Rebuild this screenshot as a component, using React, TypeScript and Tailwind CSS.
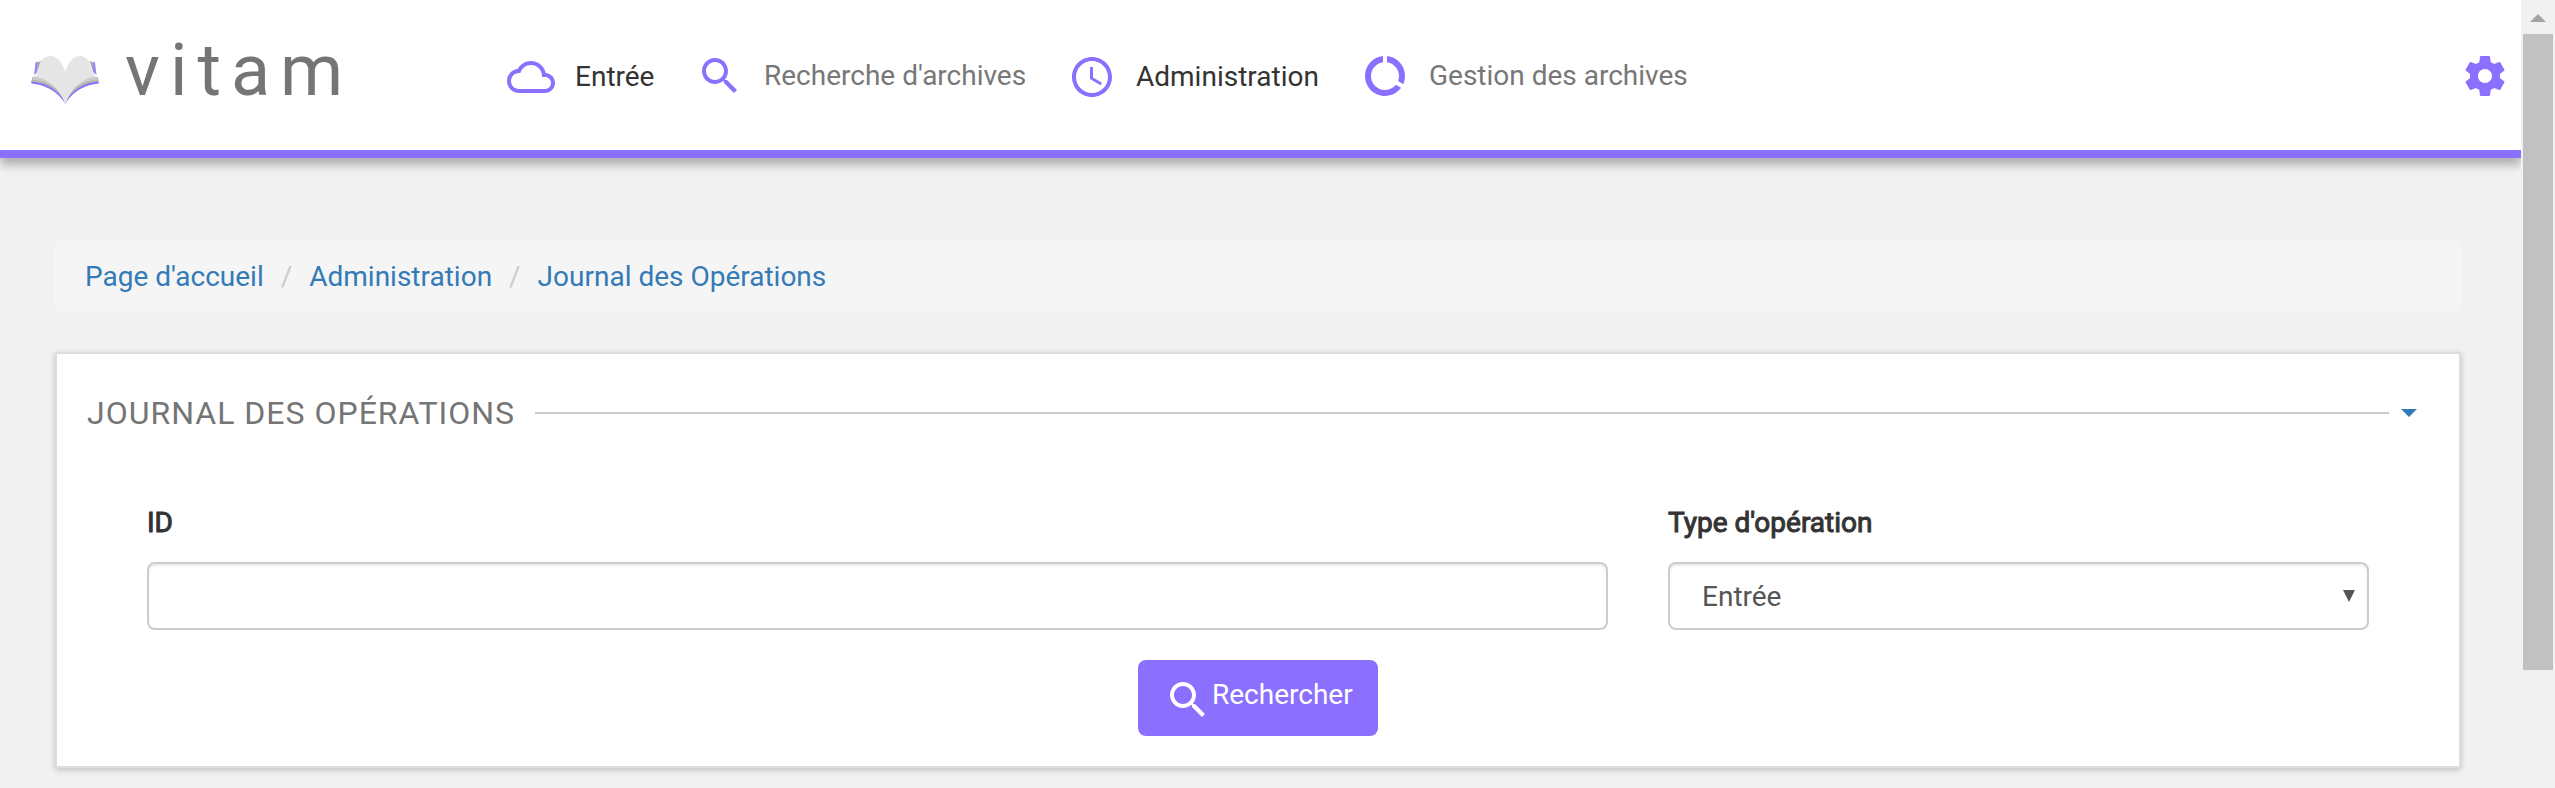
import type { ReactNode } from "react";

const SEARCH =
  "M15.5 14h-.79l-.28-.27C15.41 12.59 16 11.11 16 9.5 16 5.91 13.09 3 9.5 3S3 5.91 3 9.5 5.91 16 9.5 16c1.61 0 3.09-.59 4.23-1.57l.27.28v.79l5 4.99L20.49 19l-4.99-5zm-6 0C7.01 14 5 11.99 5 9.5S7.01 5 9.5 5 14 7.01 14 9.5 11.99 14 9.5 14z";
const CLOUD =
  "M19.35 10.04C18.67 6.59 15.64 4 12 4 9.11 4 6.6 5.64 5.35 8.04 2.34 8.36 0 10.91 0 14c0 3.31 2.69 6 6 6h13c2.76 0 5-2.24 5-5 0-2.64-2.05-4.78-4.65-4.96zM19 18H6c-2.21 0-4-1.79-4-4s1.79-4 4-4h.71C7.37 7.69 9.48 6 12 6c3.04 0 5.5 2.46 5.5 5.5v.5H19c1.66 0 3 1.34 3 3s-1.34 3-3 3z";
const CLOCK =
  "M11.99 2C6.47 2 2 6.48 2 12s4.47 10 9.99 10C17.52 22 22 17.52 22 12S17.52 2 11.99 2zM12 20c-4.42 0-8-3.58-8-8s3.58-8 8-8 8 3.58 8 8-3.58 8-8 8zM12.5 7H11v6l5.25 3.15.75-1.23-4.5-2.67z";
const USAGE =
  "M13 2.05v3.03c3.39.49 6 3.39 6 6.92 0 .9-.18 1.75-.48 2.54l2.6 1.53c.56-1.24.88-2.62.88-4.07 0-5.18-3.95-9.45-9-9.95zM12 19c-3.87 0-7-3.13-7-7 0-3.53 2.61-6.43 6-6.92V2.05c-5.06.5-9 4.76-9 9.95 0 5.52 4.47 10 9.99 10 3.31 0 6.24-1.61 8.06-4.09l-2.6-1.53C16.17 17.98 14.21 19 12 19z";
const GEAR =
  "M19.43 12.98c.04-.32.07-.64.07-.98s-.03-.66-.07-.98l2.11-1.65c.19-.15.24-.42.12-.64l-2-3.46c-.12-.22-.39-.3-.61-.22l-2.49 1c-.52-.4-1.08-.73-1.69-.98l-.38-2.65C14.46 2.18 14.25 2 14 2h-4c-.25 0-.46.18-.49.42l-.38 2.65c-.61.25-1.17.59-1.69.98l-2.49-1c-.23-.09-.49 0-.61.22l-2 3.46c-.13.22-.07.49.12.64l2.11 1.65c-.04.32-.07.65-.07.98s.03.66.07.98l-2.11 1.65c-.19.15-.24.42-.12.64l2 3.46c.12.22.39.3.61.22l2.49-1c.52.4 1.08.73 1.69.98l.38 2.65c.03.24.24.42.49.42h4c.25 0 .46-.18.49-.42l.38-2.65c.61-.25 1.17-.59 1.69-.98l2.49 1c.23.09.49 0 .61-.22l2-3.46c.12-.22.07-.49-.12-.64l-2.11-1.65zM12 15.5c-1.93 0-3.5-1.57-3.5-3.5s1.57-3.5 3.5-3.5 3.5 1.57 3.5 3.5-1.57 3.5-3.5 3.5z";

function Icon({ d, className = "" }: { d: string; className?: string }) {
  return (
    <svg viewBox="0 0 24 24" className={`size-12 shrink-0 fill-current ${className}`}>
      <path d={d} />
    </svg>
  );
}

function Book() {
  return (
    <svg viewBox="0 0 68 50" className="mt-[55px] ml-[31px] h-[50px] w-[68px] shrink-0">
      <path d="M4.500 7.500L7 6.500 6.500 17l-3.500 3zM64 7.500l-2.500-1 .5 10.500 3.500 3z" fill="#9a86f5" />
      <path d="M6.500 8L10 5.500 6.500 16zM62 8l-3.500-2.500L62 16z" fill="#a8a5b0" />
      <path d="M.3 26v2.500C13 29.500 27 36 34.300 49 41.600 36 55 29.500 67.700 28.500V26z" fill="#8b70ff" />
      <path d="M1.300 22L.3 26.500C14 27.500 28 34 34.300 48.500 40.600 34 54 27.500 67.700 26.500L66.700 22z" fill="#b5b5af" />
      <path d="M2.500 21.500L1.300 24.500C16 25.500 29 33 34.300 48.500 39.600 33 52 25.500 66.700 24.500L65.500 21.500z" fill="#cbcbc8" />
      <path d="M9.500 7.500C14-1 28-4 34.300 17 40.600-4 54-1 58.500 7.500L63.500 21.500C50 24.500 38.500 35 34.300 49.500 30 35 18 24.500 4.500 21.500z" fill="#e5e5e5" />
    </svg>
  );
}

function NavItem({ d, active, className, iconClass, children }: { d: string; active?: boolean; className: string; iconClass: string; children: ReactNode }) {
  return (
    <a className={`flex items-start ${active ? "pt-[53px] text-[#333]" : "pt-[52px] text-[#777]"} ${className}`}>
      <Icon d={d} className={`text-[#8b70ff] ${iconClass}`} />
      <span className="whitespace-nowrap pt-1 leading-10">{children}</span>
    </a>
  );
}

function Header() {
  return (
    <header className="relative flex h-[158px] items-start border-b-8 border-[#8b70ff] bg-white shadow-[0_7px_9px_rgba(0,0,0,0.27)]">
      <Book />
      <div className="ml-[26px] w-[380px] pt-[29px] text-[72px] leading-[84px] tracking-[10px] text-[#757575]">vitam</div>
      <nav className="flex">
        <NavItem d={CLOUD} active className="ml-[2px] w-[189px]" iconClass="mr-[20px]">Entrée</NavItem>
        <NavItem d={SEARCH} className="w-[372px]" iconClass="mr-[20px]">Recherche d'archives</NavItem>
        <NavItem d={CLOCK} active className="w-[293px]" iconClass="mr-[20px]">Administration</NavItem>
        <NavItem d={USAGE} className="" iconClass="mr-[20px]">Gestion des archives</NavItem>
      </nav>
      <Icon d={GEAR} className="mt-[52px] mr-[12px] ml-auto text-[#8b70ff]" />
    </header>
  );
}

function Breadcrumb() {
  return (
    <ol className="flex h-[72px] items-center rounded-lg bg-[#f5f5f5] px-[30px] pt-[2px] text-[#337ab7]">
      <li>Page d'accueil</li>
      <li className="before:px-[10px] before:pl-[17px] before:text-[#ccc] before:content-['/\00a0']">Administration</li>
      <li className="before:px-[10px] before:pl-[17px] before:text-[#ccc] before:content-['/\00a0']">Journal des Opérations</li>
    </ol>
  );
}

const LABEL = "block h-[60px] pt-px leading-10 font-normal text-[#333] [-webkit-text-stroke:1px_#333]";

function SearchPanel() {
  return (
    <section className="mt-10 flex h-[416px] flex-col border-2 border-[#ddd] bg-white shadow-[0_2px_6px_rgba(0,0,0,0.2)]">
      <div className="flex items-center pt-[39px] pl-[30px]">
        <h2 className="text-[32px] leading-10 tracking-[1px] whitespace-nowrap text-[#757575]">JOURNAL DES OPÉRATIONS</h2>
        <div className="ml-[20px] h-[2px] flex-1 bg-[#ccc]" />
        <svg viewBox="0 0 16 8" className="mr-[42px] ml-[12px] h-2 w-4 fill-[#337ab7]">
          <path d="M0 0h16L8 8z" />
        </svg>
      </div>
      <div className="mt-[69px] flex gap-[60px] px-[90px]">
        <div className="w-[1461px]">
          <label className={LABEL}>ID</label>
          <input className="block h-[68px] w-full rounded-lg border-2 border-[#ccc] bg-white shadow-[inset_0_2px_2px_rgba(0,0,0,0.075)]" />
        </div>
        <div className="w-[701px]">
          <label className={LABEL}>Type d'opération</label>
          <div className="flex h-[68px] w-full items-center justify-between rounded-lg border-2 border-[#ccc] bg-white pr-[12px] pl-[32px] text-[#555] shadow-[inset_0_2px_2px_rgba(0,0,0,0.075)]">
            <span className="pt-[2px]">Entrée</span>
            <svg viewBox="0 0 12 12" className="size-3 fill-[#555]">
              <path d="M0 0h12L6 12z" />
            </svg>
          </div>
        </div>
      </div>
      <button className="mt-[30px] ml-[1081px] flex h-[76px] w-[240px] items-start rounded-lg bg-[#8b70ff] pt-4 pl-[26px] text-white">
        <Icon d={SEARCH} />
        <span className="leading-[38px]">Rechercher</span>
      </button>
    </section>
  );
}

function Scrollbar() {
  return (
    <div className="flex h-full w-[34px] flex-col items-center bg-[#f1f1f1]">
      <svg viewBox="0 0 16 8" className="mt-[14px] mb-3 h-2 w-4 shrink-0 fill-[#a3a3a3]">
        <path d="M8 0l8 8H0z" />
      </svg>
      <div className="h-[636px] w-[30px] shrink-0 bg-[#c1c1c1]" />
    </div>
  );
}

export default function App() {
  return (
    <div className="flex h-[788px] w-[2555px] overflow-hidden bg-[#f1f1f1] font-[Roboto,sans-serif] text-[28px] leading-10">
      <div className="h-full w-[2521px] overflow-hidden">
        <Header />
        <main className="pt-[82px] pr-[60px] pl-[55px]">
          <Breadcrumb />
          <SearchPanel />
        </main>
      </div>
      <Scrollbar />
    </div>
  );
}
